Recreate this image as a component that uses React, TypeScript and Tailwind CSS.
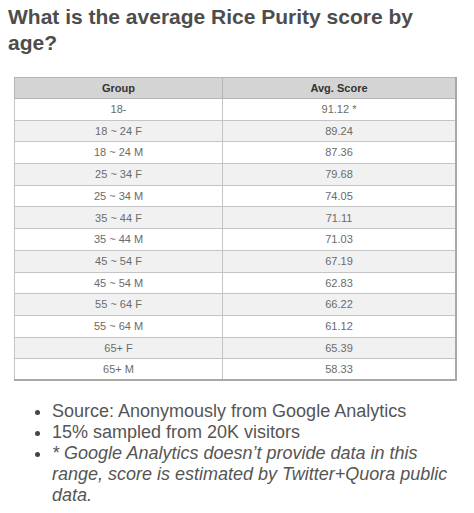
const rows: [string, string][] = [
  ["18-", "91.12 *"],
  ["18 ~ 24 F", "89.24"],
  ["18 ~ 24 M", "87.36"],
  ["25 ~ 34 F", "79.68"],
  ["25 ~ 34 M", "74.05"],
  ["35 ~ 44 F", "71.11"],
  ["35 ~ 44 M", "71.03"],
  ["45 ~ 54 F", "67.19"],
  ["45 ~ 54 M", "62.83"],
  ["55 ~ 64 F", "66.22"],
  ["55 ~ 64 M", "61.12"],
  ["65+ F", "65.39"],
  ["65+ M", "58.33"],
];

const App = () => {
  return (
    <div className="w-[474px] h-[513px] bg-white pl-2 pr-3 pt-[4px] font-['Liberation_Sans',Arial,sans-serif] overflow-hidden">
      <h2 className="text-[21px] leading-[26px] font-bold text-[#4d4d4d]">
        What is the average Rice Purity score by age?
      </h2>

      <table className="mt-[21px] ml-[6px] w-[443px] border-collapse border-r-2 border-b-2 border-[#a8a8a8] text-[11px] table-fixed">
        <colgroup>
          <col className="w-[208px]" />
          <col />
        </colgroup>
        <thead>
          <tr className="bg-[#d4d4d4] text-[#333]">
            <th className="h-[21px] border border-[#b5b5b5] font-bold text-center">Group</th>
            <th className="h-[21px] border border-[#b5b5b5] font-bold text-center">Avg. Score</th>
          </tr>
        </thead>
        <tbody>
          {rows.map(([group, score], i) => (
            <tr key={group} className={i % 2 === 0 ? "bg-white" : "bg-[#f1f1f1]"}>
              <td className="h-[21.7px] border border-[#c4c4c4] text-center text-[#6b6b6b]">{group}</td>
              <td className="h-[21.7px] border border-[#c4c4c4] text-center text-[#6b6b6b]">{score}</td>
            </tr>
          ))}
        </tbody>
      </table>

      <ul className="mt-[20px] pl-[44px] pr-1 list-disc text-[18px] leading-[21px] text-[#555] marker:text-[#444]">
        <li>Source: Anonymously from Google Analytics</li>
        <li>15% sampled from 20K visitors</li>
        <li className="italic">
          * Google Analytics doesn’t provide data in this range, score is estimated by Twitter+Quora public data.
        </li>
      </ul>
    </div>
  );
};

export default App;
